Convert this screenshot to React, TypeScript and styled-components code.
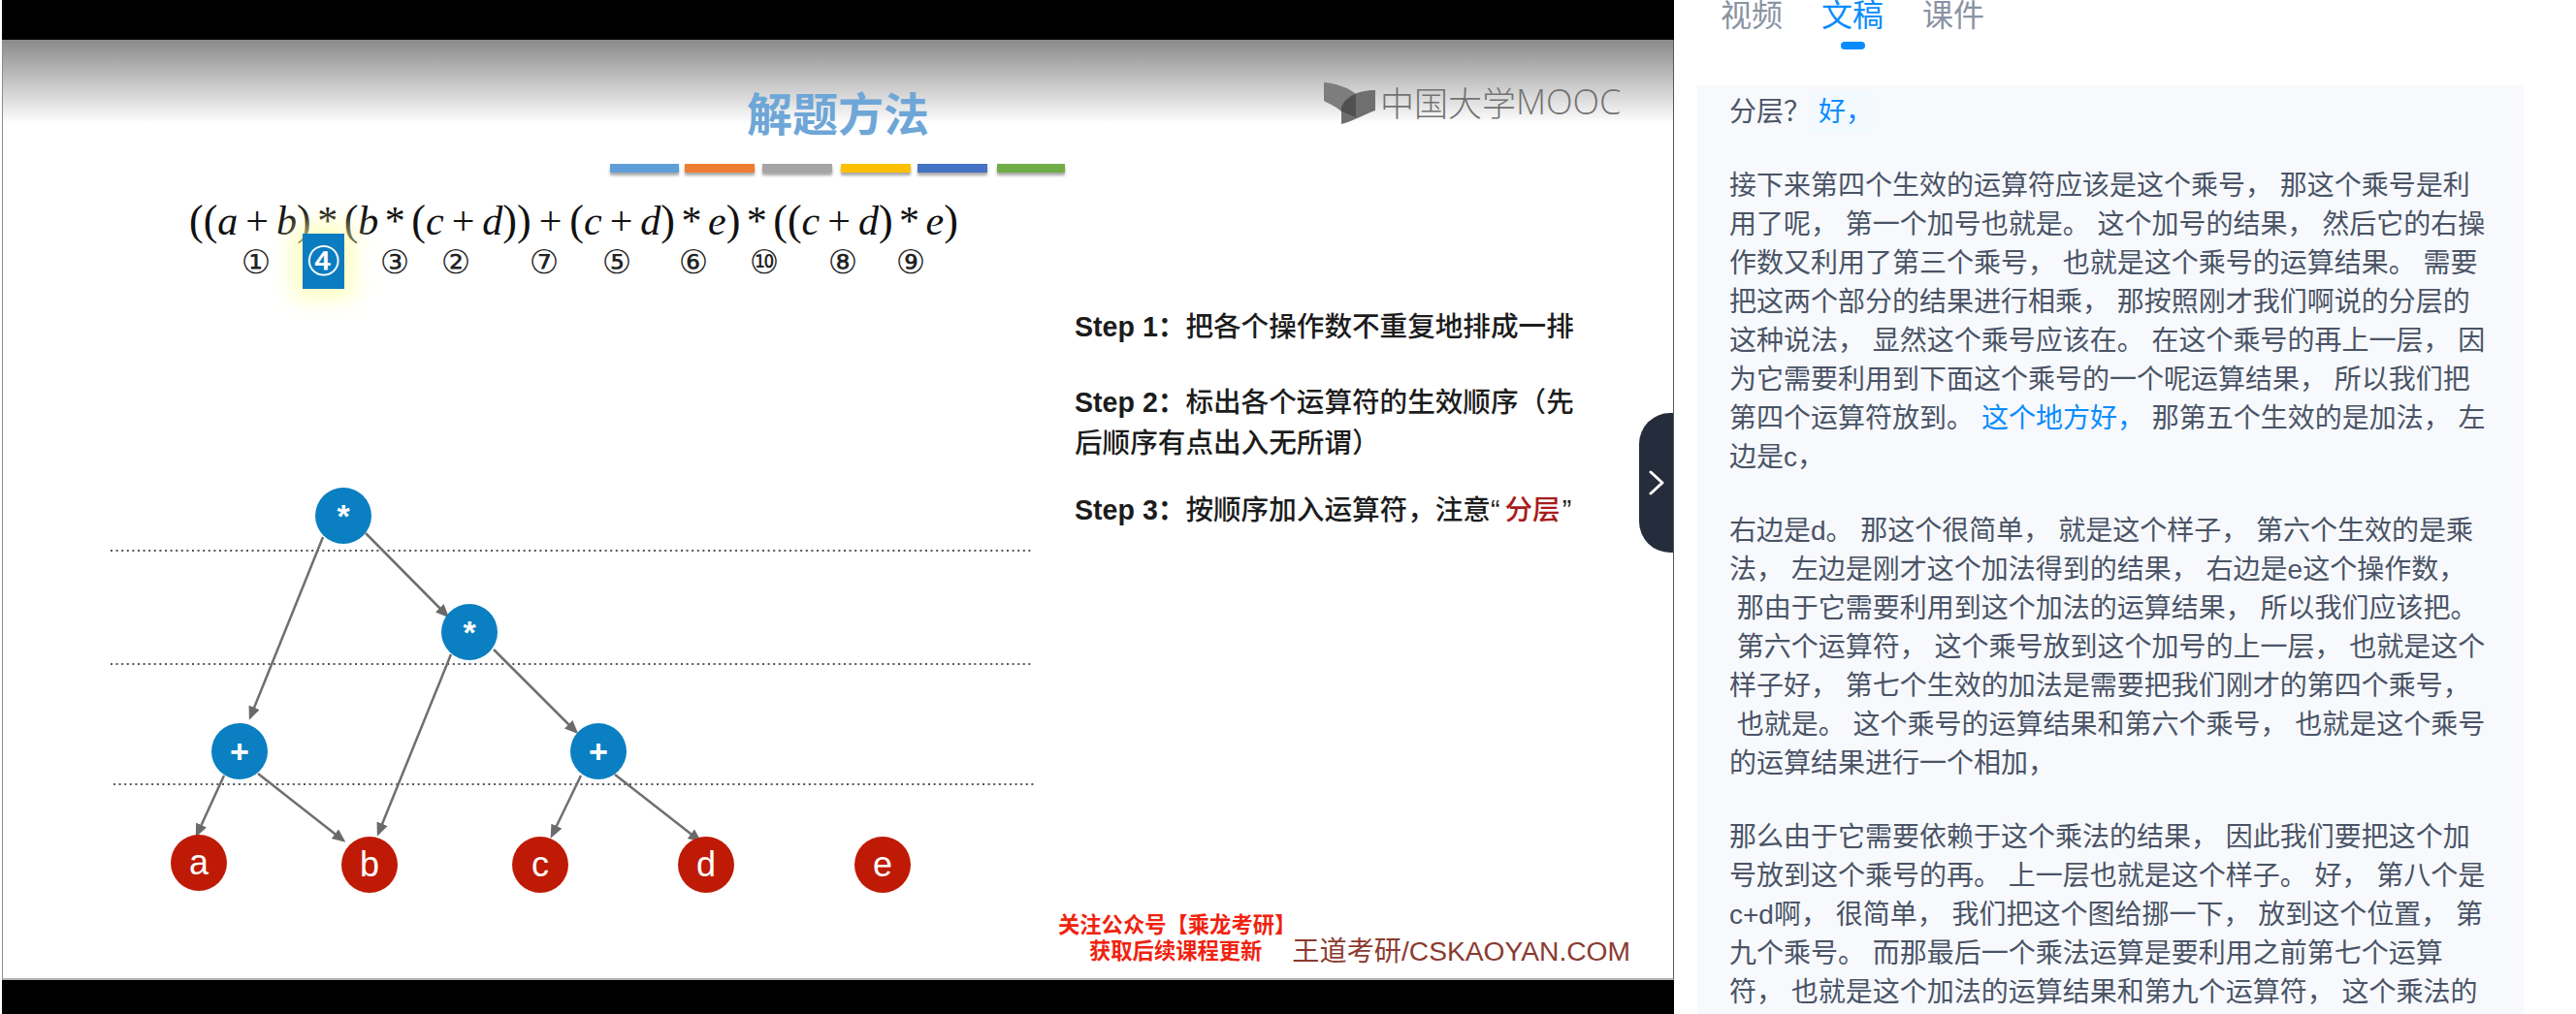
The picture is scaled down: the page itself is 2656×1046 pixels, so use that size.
import React from "react";
import styled, { createGlobalStyle } from "styled-components";

const SANS = `"Liberation Sans", "Noto Sans CJK SC", sans-serif`;
const SERIF = `"Liberation Serif", serif`;

const GlobalStyle = createGlobalStyle`
  html, body {
    margin: 0;
    padding: 0;
    background: #fff;
    overflow: hidden;
  }
  body {
    font-family: ${SANS};
  }
`;

const Page = styled.div`
  display: flex;
  width: 2656px;
  height: 1046px;
  overflow: hidden;
  background: #fff;
`;

const VideoColumn = styled.div`
  position: relative;
  flex: none;
  width: 1726px;
  height: 1046px;
  padding-left: 2px;
  box-sizing: border-box;
  display: flex;
  flex-direction: column;
`;

const BlackBand = styled.div<{ $height: number }>`
  flex: none;
  height: ${(p) => p.$height}px;
  background: #000;
`;

const Slide = styled.div`
  flex: none;
  height: 970px;
  box-sizing: border-box;
  display: flex;
  flex-direction: column;
  border-left: 1px solid #8c8c8c;
  border-right: 1px solid #555;
  border-bottom: 2px solid #b0b0b0;
  background: linear-gradient(#8a8a8a 0, #ffffff 87px, #ffffff 100%);
`;

const SlideHeader = styled.div`
  flex: none;
  height: 56px;
  padding: 44px 0 0 767px;
  display: flex;
  align-items: flex-start;
`;

const SlideTitle = styled.div`
  font-family: "Noto Sans CJK SC", sans-serif;
  font-size: 47px;
  line-height: 46px;
  font-weight: 700;
  margin-top: 7px;
  color: #6ea6d7;
  white-space: nowrap;
`;

const Logo = styled.div`
  display: flex;
  align-items: center;
  margin-left: 407px;
  color: #727272;
  white-space: nowrap;
`;

const LogoCn = styled.span`
  font-family: "Noto Sans CJK SC", sans-serif;
  font-size: 35px;
  line-height: 40px;
  font-weight: 300;
  margin: 0 0 4px 4px;
`;

const LogoEn = styled.span`
  font-family: "Open Sans", sans-serif;
  font-size: 36px;
  line-height: 40px;
  font-weight: 300;
  margin-bottom: 4px;
`;

const BarRow = styled.div`
  flex: none;
  display: flex;
  height: 9px;
  margin: 28px 0 0 626px;
`;

const Bar = styled.div<{ $color: string; $width: number; $gap: number }>`
  width: ${(p) => p.$width}px;
  margin-left: ${(p) => p.$gap}px;
  background: ${(p) => p.$color};
  box-shadow: 0 3px 3px rgba(0, 0, 0, 0.35);
`;

const Formula = styled.div`
  flex: none;
  height: 48px;
  margin: 26px 0 0 192px;
  display: flex;
  align-items: baseline;
  font-family: ${SERIF};
  color: #111;
  white-space: nowrap;
`;

const Paren = styled.span`
  font-size: 44px;
  line-height: 48px;
`;

const Letter = styled.span`
  font-size: 42px;
  line-height: 48px;
  font-style: italic;
`;

const Op = styled.span<{ $gap: number }>`
  font-size: 42px;
  line-height: 48px;
  margin: 0 ${(p) => p.$gap}px;
`;

const NumberRow = styled.div`
  flex: none;
  height: 36px;
  display: flex;
  align-items: center;
  padding-left: 241px;
`;

const NumberCell = styled.div<{ $gap: number }>`
  flex: none;
  width: 40px;
  margin-left: ${(p) => p.$gap}px;
  text-align: center;
  font-family: "DejaVu Sans", "Noto Sans CJK SC", sans-serif;
  font-size: 34px;
  line-height: 38px;
  color: #222;
`;

const ActiveCell = styled(NumberCell)`
  position: relative;
  z-index: 1;
  height: 57px;
  width: 43px;
  margin-top: -2px;
  font-size: 42px;
  line-height: 57px;
  color: #fff;
  background: #0b7cc0;
  box-shadow: 0 0 22px 10px rgba(255, 255, 170, 0.75);
`;

const SlideBody = styled.div`
  flex: 1;
  display: flex;
  min-height: 0;
`;

const TreeCanvas = styled.div`
  position: relative;
  flex: none;
  width: 1105px;
`;

const EdgeLayer = styled.svg`
  position: absolute;
  left: 0;
  top: 0;
`;

const TreeNode = styled.div<{ $x: number; $y: number; $kind: "op" | "leaf" }>`
  position: absolute;
  left: ${(p) => p.$x - 29}px;
  top: ${(p) => p.$y - 29}px;
  width: 58px;
  height: 58px;
  border-radius: 50%;
  display: flex;
  align-items: center;
  justify-content: center;
  color: #fff;
  font-size: ${(p) => (p.$kind === "op" ? 34 : 36)}px;
  font-weight: ${(p) => (p.$kind === "op" ? 700 : 400)};
  background: ${(p) => (p.$kind === "op" ? "#0a7fc1" : "#bf1a05")};
`;

const Steps = styled.div`
  padding-top: 28px;
  font-size: 28.6px;
  line-height: 42px;
  font-weight: 500;
  color: #1c1c1c;
  white-space: nowrap;
`;

const StepBlock = styled.div<{ $gap: number }>`
  margin-bottom: ${(p) => p.$gap}px;
`;

const StepLabel = styled.span`
  font-weight: 700;
`;

const RedWord = styled.span`
  margin: 0 2px 0 5px;
  color: #a81c1c;
`;

const SlideFooter = styled.div`
  flex: none;
  height: 68px;
  padding-left: 1088px;
  display: flex;
  white-space: nowrap;
`;

const Promo = styled.div`
  font-size: 22.3px;
  line-height: 27px;
  font-weight: 700;
  color: #f0220f;
`;

const PromoSecond = styled.div`
  margin-left: 32px;
`;

const Brand = styled.div`
  align-self: flex-start;
  margin: 22px 0 0 -4px;
  font-size: 28.2px;
  line-height: 36px;
  color: #8a3b30;
`;

const CollapseHandle = styled.div`
  position: absolute;
  top: 426px;
  right: 1px;
  width: 35px;
  height: 144px;
  border-radius: 32px 0 0 32px;
  background: #252c3b;
  display: flex;
  align-items: center;
  justify-content: center;
`;

const SideColumn = styled.div`
  flex: 1;
  min-width: 0;
  height: 1046px;
  overflow: hidden;
`;

const Tabs = styled.div`
  height: 88px;
  padding-left: 48px;
  display: flex;
  gap: 40px;
`;

const Tab = styled.div<{ $active?: boolean }>`
  display: flex;
  flex-direction: column;
  align-items: center;
  font-size: 32px;
  line-height: 32px;
  color: ${(p) => (p.$active ? "#0a8cff" : "#8a93a3")};
`;

const TabMark = styled.div`
  width: 25px;
  height: 8px;
  margin-top: 11px;
  border-radius: 4px;
  background: #0a8cff;
`;

const Transcript = styled.div`
  width: 852px;
  height: 958px;
  margin-left: 24px;
  padding: 8px 0 0 33px;
  box-sizing: border-box;
  overflow: hidden;
  background: #f7f9fd;
  font-size: 28px;
  line-height: 40px;
  color: #4a5466;
`;

const Paragraph = styled.div<{ $gap: number }>`
  margin-bottom: ${(p) => p.$gap}px;
`;

const Line = styled.div`
  white-space: pre;
  height: 40px;
`;

const Sentence = styled.span<{ $current?: boolean }>`
  display: inline-block;
  padding: 0 1px 0 8px;
  margin: -1px -1px -1px 0;
  line-height: 42px;
  vertical-align: top;
  color: #0a8cff;
  background: ${(p) => (p.$current ? "#f2faff" : "transparent")};
`;

const bars = [
  { color: "#5f9fd8", width: 71, gap: 0 },
  { color: "#ed7d31", width: 72, gap: 6 },
  { color: "#a5a5a5", width: 72, gap: 8 },
  { color: "#ffc000", width: 72, gap: 9 },
  { color: "#4472c4", width: 72, gap: 7 },
  { color: "#70ad47", width: 70, gap: 10 },
];

const formula = "((a+b)*(b*(c+d))+(c+d)*e)*((c+d)*e)".split("");

const numbers = [
  { label: "①", gap: 0 },
  { label: "④", gap: 28, active: true },
  { label: "③", gap: 32 },
  { label: "②", gap: 23 },
  { label: "⑦", gap: 51 },
  { label: "⑤", gap: 35 },
  { label: "⑥", gap: 39 },
  { label: "⑩", gap: 33 },
  { label: "⑧", gap: 41 },
  { label: "⑨", gap: 30 },
];

// tree coordinates are relative to the canvas
const ORIGIN_X = 3;
const ORIGIN_Y = 288;

const nodes: { label: string; x: number; y: number; kind: "op" | "leaf" }[] = [
  { label: "*", x: 354, y: 532, kind: "op" },
  { label: "*", x: 484, y: 652, kind: "op" },
  { label: "+", x: 247, y: 775, kind: "op" },
  { label: "+", x: 617, y: 775, kind: "op" },
  { label: "a", x: 205, y: 890, kind: "leaf" },
  { label: "b", x: 381, y: 892, kind: "leaf" },
  { label: "c", x: 557, y: 892, kind: "leaf" },
  { label: "d", x: 728, y: 892, kind: "leaf" },
  { label: "e", x: 910, y: 892, kind: "leaf" },
];

const edges = [
  [333, 554, 258, 740],
  [377, 550, 461, 635],
  [465, 675, 390, 860],
  [509, 670, 594, 755],
  [231, 800, 203, 861],
  [266, 798, 354, 867],
  [599, 800, 569, 862],
  [634, 799, 721, 867],
];

const dottedLines = [
  [114, 568, 1063],
  [114, 685, 1063],
  [117, 809, 1066],
];

const transcript: { gap: number; lines: React.ReactNode[] }[] = [
  {
    gap: 36,
    lines: [
      <>
        分层？<Sentence $current>好，</Sentence>
      </>,
    ],
  },
  {
    gap: 36,
    lines: [
      "接下来第四个生效的运算符应该是这个乘号， 那这个乘号是利",
      "用了呢， 第一个加号也就是。 这个加号的结果， 然后它的右操",
      "作数又利用了第三个乘号， 也就是这个乘号的运算结果。 需要",
      "把这两个部分的结果进行相乘， 那按照刚才我们啊说的分层的",
      "这种说法， 显然这个乘号应该在。 在这个乘号的再上一层， 因",
      "为它需要利用到下面这个乘号的一个呢运算结果， 所以我们把",
      <>
        第四个运算符放到。<Sentence>这个地方好，</Sentence> 那第五个生效的是加法， 左
      </>,
      "边是c，",
    ],
  },
  {
    gap: 36,
    lines: [
      "右边是d。 那这个很简单， 就是这个样子， 第六个生效的是乘",
      "法， 左边是刚才这个加法得到的结果， 右边是e这个操作数，",
      " 那由于它需要利用到这个加法的运算结果， 所以我们应该把。",
      " 第六个运算符， 这个乘号放到这个加号的上一层， 也就是这个",
      "样子好， 第七个生效的加法是需要把我们刚才的第四个乘号，",
      " 也就是。 这个乘号的运算结果和第六个乘号， 也就是这个乘号",
      "的运算结果进行一个相加，",
    ],
  },
  {
    gap: 36,
    lines: [
      "那么由于它需要依赖于这个乘法的结果， 因此我们要把这个加",
      "号放到这个乘号的再。 上一层也就是这个样子。 好， 第八个是",
      "c+d啊， 很简单， 我们把这个图给挪一下， 放到这个位置， 第",
      "九个乘号。 而那最后一个乘法运算是要利用之前第七个运算",
      "符， 也就是这个加法的运算结果和第九个运算符， 这个乘法的",
    ],
  },
];

const renderFormulaToken = (token: string, index: number) => {
  if (token === "(" || token === ")") return <Paren key={index}>{token}</Paren>;
  if (token === "+") return <Op key={index} $gap={8}>{token}</Op>;
  if (token === "*") return <Op key={index} $gap={6.5}>{token}</Op>;
  return <Letter key={index}>{token}</Letter>;
};

const MoocMark: React.FC = () => (
  <svg width="54" height="44" viewBox="0 0 54 44">
    <path d="M0 0C14 1 26 6 33 12V32L18 43V30C14 26 6 22 0 19Z" fill="#7d7d7d" />
    <path d="M53 8C36 8 22 14 18 26V43C30 40 44 32 53 29Z" fill="#6f6f6f" />
    <path d="M33 12C25 15 20 20 18 26V30L33 36Z" fill="#505050" />
  </svg>
);

const App: React.FC = () => {
  return (
    <Page>
      <GlobalStyle />
      <VideoColumn>
        <BlackBand $height={41} />
        <Slide>
          <SlideHeader>
            <SlideTitle>解题方法</SlideTitle>
            <Logo>
              <MoocMark />
              <LogoCn>中国大学</LogoCn>
              <LogoEn>MOOC</LogoEn>
            </Logo>
          </SlideHeader>
          <BarRow>
            {bars.map((bar) => (
              <Bar key={bar.color} $color={bar.color} $width={bar.width} $gap={bar.gap} />
            ))}
          </BarRow>
          <Formula>{formula.map(renderFormulaToken)}</Formula>
          <NumberRow>
            {numbers.map((item) =>
              item.active ? (
                <ActiveCell key={item.label} $gap={item.gap}>
                  {item.label}
                </ActiveCell>
              ) : (
                <NumberCell key={item.label} $gap={item.gap}>
                  {item.label}
                </NumberCell>
              )
            )}
          </NumberRow>
          <SlideBody>
            <TreeCanvas>
              <EdgeLayer width="1105" height="620">
                <defs>
                  <marker id="arrow" markerWidth="16" markerHeight="14" refX="11" refY="6" orient="auto" markerUnits="userSpaceOnUse">
                    <path d="M0 0L14 6L0 12Z" fill="#6a6a6a" />
                  </marker>
                </defs>
                {dottedLines.map(([x1, y, x2]) => (
                  <line
                    key={y}
                    x1={x1 - ORIGIN_X}
                    y1={y - ORIGIN_Y}
                    x2={x2 - ORIGIN_X}
                    y2={y - ORIGIN_Y}
                    stroke="#555"
                    strokeWidth="2"
                    strokeDasharray="2 3.6"
                  />
                ))}
                {edges.map(([x1, y1, x2, y2]) => (
                  <line
                    key={`${x1}-${y1}`}
                    x1={x1 - ORIGIN_X}
                    y1={y1 - ORIGIN_Y}
                    x2={x2 - ORIGIN_X}
                    y2={y2 - ORIGIN_Y}
                    stroke="#6f6f6f"
                    strokeWidth="2.5"
                    markerEnd="url(#arrow)"
                  />
                ))}
              </EdgeLayer>
              {nodes.map((node) => (
                <TreeNode
                  key={`${node.label}-${node.x}`}
                  $x={node.x - ORIGIN_X}
                  $y={node.y - ORIGIN_Y}
                  $kind={node.kind}
                >
                  {node.label}
                </TreeNode>
              ))}
            </TreeCanvas>
            <Steps>
              <StepBlock $gap={36}>
                <StepLabel>Step 1：</StepLabel>把各个操作数不重复地排成一排
              </StepBlock>
              <StepBlock $gap={27}>
                <StepLabel>Step 2：</StepLabel>标出各个运算符的生效顺序（先
                <br />
                后顺序有点出入无所谓）
              </StepBlock>
              <StepBlock $gap={0}>
                <StepLabel>Step 3：</StepLabel>按顺序加入运算符，注意“<RedWord>分层</RedWord>”
              </StepBlock>
            </Steps>
          </SlideBody>
          <SlideFooter>
            <Promo>
              关注公众号【乘龙考研】
              <PromoSecond>获取后续课程更新</PromoSecond>
            </Promo>
            <Brand>王道考研/CSKAOYAN.COM</Brand>
          </SlideFooter>
        </Slide>
        <BlackBand $height={35} />
        <CollapseHandle>
          <svg width="16" height="26" viewBox="0 0 16 26">
            <path d="M2 2L14 13L2 24" fill="none" stroke="#fff" strokeWidth="3" strokeLinecap="round" strokeLinejoin="round" />
          </svg>
        </CollapseHandle>
      </VideoColumn>
      <SideColumn>
        <Tabs>
          <Tab>视频</Tab>
          <Tab $active>
            文稿
            <TabMark />
          </Tab>
          <Tab>课件</Tab>
        </Tabs>
        <Transcript>
          {transcript.map((paragraph, index) => (
            <Paragraph key={index} $gap={paragraph.gap}>
              {paragraph.lines.map((line, lineIndex) => (
                <Line key={lineIndex}>{line}</Line>
              ))}
            </Paragraph>
          ))}
        </Transcript>
      </SideColumn>
    </Page>
  );
};

export default App;
